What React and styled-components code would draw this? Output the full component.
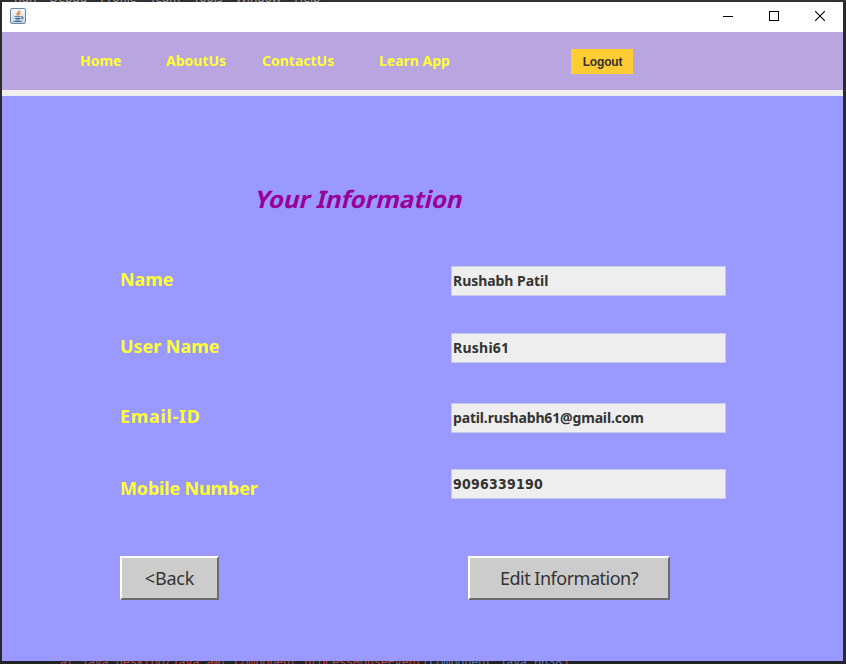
import React from 'react';
import styled, { createGlobalStyle } from 'styled-components';

const GlobalStyle = createGlobalStyle`
  * { box-sizing: border-box; }
  body { margin: 0; background: #292a2c; overflow: hidden; }
`;

const ui = '"Noto Sans", "Open Sans", sans-serif';

const Desktop = styled.div`
  display: grid;
  grid-template-rows: 2px 659px 3px;
  width: 846px;
  height: 664px;
  overflow: hidden;
  background: #292a2c;
`;

const MenuEdge = styled.div`
  display: flex;
  align-items: flex-end;
  overflow: hidden;
  height: 2px;
  padding-left: 14px;
  color: #a0a0a0;
  background: #302e30;
  font: 12px/9px ${ui};
  word-spacing: 10px;
  white-space: pre;
`;

const ConsoleEdge = styled.div`
  display: flex;
  align-items: center;
  overflow: hidden;
  height: 3px;
  padding-left: 60px;
  color: #b44950;
  background: #222326;
  font: 12px/12px "Liberation Mono", monospace;
  letter-spacing: -0.23px;
  white-space: pre;
`;

const ConsoleLink = styled.span`
  color: #5678b8;
`;

const Window = styled.main`
  display: grid;
  grid-template-columns: 841px;
  grid-template-rows: 30px 64px 565px;
  width: 841px;
  height: 659px;
  margin-left: 2px;
  background: #eeeeee;
`;

const TitleBar = styled.header`
  display: flex;
  justify-content: space-between;
  align-items: center;
  padding: 0 0 2px 8px;
  background: #ffffff;
`;

const WindowControls = styled.div`
  display: flex;
`;

const WindowControl = styled.button`
  display: grid;
  place-items: center;
  width: 46px;
  height: 28px;
  padding: 0;
  border: 0;
  background: transparent;
`;

const NavBar = styled.nav`
  display: grid;
  grid-template-columns: 86px 96px 117px 192px auto;
  align-items: center;
  height: 58px;
  padding: 0 0 0 78px;
  background: #b9a5e0;
`;

const NavLink = styled.a`
  color: #ffff33;
  font: bold 14px/20px ${ui};
  letter-spacing: ${({ $tracking }) => $tracking || '0'};
  white-space: nowrap;
`;

const Logout = styled.button`
  width: 62px;
  height: 25px;
  padding: 1px 0 0 1px;
  border: 0;
  color: #333333;
  background: #ffcc33;
  font: bold 12px/20px "Liberation Sans", Arial, sans-serif;
  letter-spacing: -0.15px;
`;

const Content = styled.section`
  display: flex;
  flex-direction: column;
  padding: 84px 0 0 118px;
  background: #9999ff;
`;

const Heading = styled.h1`
  width: 212px;
  height: 38px;
  margin: 0 0 48px 136px;
  color: #990099;
  font: bold 24px/37px ${ui};
  transform: skewX(-14deg);
  white-space: nowrap;
`;

const Record = styled.div`
  display: grid;
  grid-template-columns: 331px 275px;
  align-items: start;
  height: 30px;
  margin-bottom: ${({ $gap }) => $gap}px;
`;

const Label = styled.label`
  padding-top: ${({ $drop }) => $drop || 0}px;
  color: #ffff33;
  font: bold 18px/27px ${ui};
  letter-spacing: ${({ $tracking }) => $tracking || '-0.05px'};
  white-space: nowrap;
`;

const Value = styled.output`
  display: block;
  height: 30px;
  padding-left: 1px;
  border: 1px solid #c5cce8;
  color: #333333;
  background: #eeeeee;
  font: bold 14px/28px ${({ $digits }) => ($digits ? '"DejaVu Sans Condensed", "DejaVu Sans", sans-serif' : ui)};
  letter-spacing: ${({ $tracking }) => $tracking || '-0.05px'};
  white-space: nowrap;
`;

const Actions = styled.div`
  display: flex;
  gap: 249px;
`;

const Action = styled.button`
  width: ${({ $width }) => $width}px;
  height: 44px;
  padding: 0;
  border: 2px solid;
  border-color: #ffffff #6b6b6f #6b6b6f #ffffff;
  color: #333333;
  background: #cccccc;
  font: 18px/26px ${ui};
  letter-spacing: ${({ $tracking }) => $tracking};
  white-space: nowrap;
`;

const records = [
  { label: 'Name', value: 'Rushabh Patil', gap: 37 },
  { label: 'User Name', value: 'Rushi61', gap: 40, valueTracking: '0.25px' },
  { label: 'Email-ID', value: 'patil.rushabh61@gmail.com', gap: 36, tracking: '0.7px', valueTracking: '-0.16px' },
  { label: 'Mobile Number', value: '9096339190', gap: 57, drop: 6, tracking: '-0.17px', valueTracking: '0.25px', digits: true },
];

function JavaIcon() {
  return (
    <svg width="16" height="16" viewBox="0 0 16 16" fill="none" aria-hidden="true">
      <defs>
        <linearGradient id="tile" x1="0" y1="0" x2="0" y2="1">
          <stop stopColor="#f7fafc" />
          <stop offset="1" stopColor="#c5d4e2" />
        </linearGradient>
      </defs>
      <rect x="0.5" y="0.5" width="15" height="15" rx="1.5" fill="url(#tile)" stroke="#71879e" />
      <path d="M9.8 2.5C9.5 4 6.1 4.5 7.2 6.5L8 7.6M10.7 4.8C8.5 5.4 8.2 6.4 9.2 7.3" stroke="#e58436" strokeWidth="1.3" />
      <path d="M4.5 8.8h6.2M5.2 10.5h5.1M5.6 12h4.2M11.1 9c2.4-.8 2.5 1.5.3 2.1M3.6 13.5h8.2" stroke="#426f96" strokeWidth="1.1" />
    </svg>
  );
}

export default function App() {
  return (
    <>
      <GlobalStyle />
      <Desktop>
        <MenuEdge>Run Debug Profile Team Tools Window Help</MenuEdge>
        <Window>
          <TitleBar>
            <JavaIcon />
            <WindowControls>
              <WindowControl aria-label="Minimize">
                <svg width="10" height="10"><path d="M0 5.5h10" stroke="#000" /></svg>
              </WindowControl>
              <WindowControl aria-label="Maximize">
                <svg width="10" height="10"><rect x=".5" y=".5" width="9" height="9" fill="none" stroke="#000" /></svg>
              </WindowControl>
              <WindowControl aria-label="Close">
                <svg width="10" height="10"><path d="M0 0l10 10M10 0L0 10" stroke="#000" strokeWidth="1.1" /></svg>
              </WindowControl>
            </WindowControls>
          </TitleBar>
          <NavBar>
            <NavLink>Home</NavLink>
            <NavLink>AboutUs</NavLink>
            <NavLink>ContactUs</NavLink>
            <NavLink>Learn App</NavLink>
            <Logout>Logout</Logout>
          </NavBar>
          <Content>
            <Heading>Your Information</Heading>
            {records.map((r) => (
              <Record key={r.label} $gap={r.gap}>
                <Label $drop={r.drop} $tracking={r.tracking}>{r.label}</Label>
                <Value $digits={r.digits} $tracking={r.valueTracking}>{r.value}</Value>
              </Record>
            ))}
            <Actions>
              <Action $width={99} $tracking="-0.2px">&lt;Back</Action>
              <Action $width={202} $tracking="-0.5px">Edit Information?</Action>
            </Actions>
          </Content>
        </Window>
        <ConsoleEdge>
          at java.desktop/java.awt.Component.processMouseEvent(<ConsoleLink>Component.java:6638</ConsoleLink>)
        </ConsoleEdge>
      </Desktop>
    </>
  );
}
